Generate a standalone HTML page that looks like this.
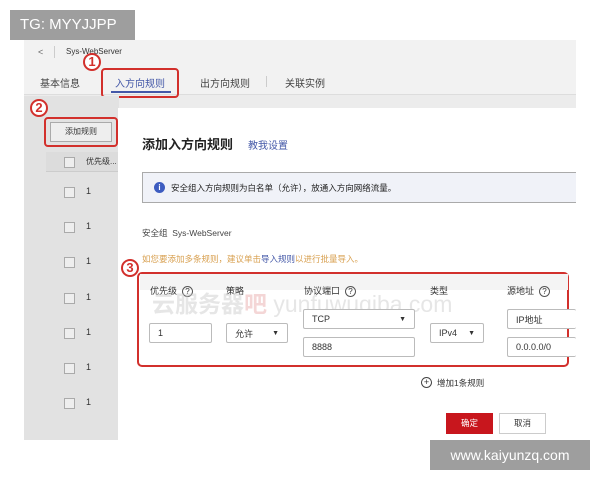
<!DOCTYPE html><html><head><meta charset="utf-8"><style>
*{margin:0;padding:0;box-sizing:border-box}
body{width:600px;height:480px;background:#fff;position:relative;overflow:hidden;font-family:"Liberation Sans","Noto Sans CJK SC",sans-serif;color:#333}
.a{position:absolute}
.t{font-size:9px}
.in{position:absolute;border:1px solid #bbb;background:#fff;font-size:9px;padding-left:8px;display:flex;align-items:center;border-radius:2px}
.q{display:inline-block;width:11px;height:11px;border:1px solid #555;border-radius:50%;font-size:8px;text-align:center;line-height:9px;margin-left:5px}
.cb{position:absolute;left:64px;width:11px;height:11px;border:1px solid #aaa;background:#eee}
.rn{position:absolute;left:86px;font-size:9px}
.circ{position:absolute;width:18px;height:18px;border:2px solid #d2302c;border-radius:50%;color:#d2302c;font-weight:bold;font-size:13px;text-align:center;line-height:14px;background:#fff}
.arr{font-size:7px;position:absolute;right:8px}
</style></head><body>
<div class="a" style="left:24px;top:40px;width:552px;height:400px;background:#ececec"></div>
<div class="a" style="left:24px;top:40px;width:552px;height:55px;background:#f2f2f2;border-bottom:1px solid #ddd"></div>
<div class="a t" style="left:38px;top:47px;color:#666">&lt;</div>
<div class="a" style="left:54px;top:46px;width:1px;height:12px;background:#ccc"></div>
<div class="a t" style="left:66px;top:47px;font-size:8px">Sys-WebServer</div>
<div class="a" style="left:40px;top:75px;font-size:10px;color:#444">基本信息</div>
<div class="a" style="left:115px;top:75px;font-size:10px;color:#4458a8">入方向规则</div>
<div class="a" style="left:111px;top:91px;width:60px;height:2px;background:#4458a8"></div>
<div class="a" style="left:200px;top:75px;font-size:10px;color:#444">出方向规则</div>
<div class="a" style="left:266px;top:76px;width:1px;height:11px;background:#ccc"></div>
<div class="a" style="left:285px;top:75px;font-size:10px;color:#444">关联实例</div>
<div class="a" style="left:101px;top:68px;width:78px;height:30px;border:2px solid #d2302c;border-radius:4px"></div>
<div class="circ" style="left:83px;top:53px">1</div>
<div class="a" style="left:24px;top:96px;width:95px;height:344px;background:#e2e2e2"></div>
<div class="a" style="left:50px;top:122px;width:62px;height:20px;border:1px solid #aaa;background:#eee;font-size:8px;text-align:center;line-height:18px">添加规则</div>
<div class="a" style="left:44px;top:117px;width:74px;height:30px;border:2px solid #d2302c;border-radius:4px"></div>
<div class="circ" style="left:30px;top:99px">2</div>
<div class="a" style="left:46px;top:152px;width:72px;height:20px;background:#dcdcdc;border-bottom:1px solid #ccc"></div>
<div class="cb" style="top:157px"></div><div class="rn" style="top:156px;font-size:8px">优先级...</div>
<div class="cb" style="top:187px"></div><div class="rn" style="top:186px">1</div>
<div class="cb" style="top:222px"></div><div class="rn" style="top:221px">1</div>
<div class="cb" style="top:257px"></div><div class="rn" style="top:256px">1</div>
<div class="cb" style="top:293px"></div><div class="rn" style="top:292px">1</div>
<div class="cb" style="top:328px"></div><div class="rn" style="top:327px">1</div>
<div class="cb" style="top:363px"></div><div class="rn" style="top:362px">1</div>
<div class="cb" style="top:398px"></div><div class="rn" style="top:397px">1</div>
<div class="a" style="left:118px;top:108px;width:458px;height:332px;background:#fff"></div>
<div class="a" style="left:142px;top:134px;font-size:13px;font-weight:bold;color:#222">添加入方向规则</div>
<div class="a" style="left:248px;top:137px;font-size:10px;color:#4458a8">教我设置</div>
<div class="a" style="left:142px;top:172px;width:434px;height:31px;background:#f0f2f8;border:1px solid #aaa;border-right:none"></div>
<div class="a" style="left:154px;top:182px;width:11px;height:11px;border-radius:50%;background:#3d5cc0;color:#fff;font-size:8px;text-align:center;line-height:11px;font-weight:bold">i</div>
<div class="a" style="left:171px;top:182px;font-size:8.5px;color:#222">安全组入方向规则为白名单（允许），放通入方向网络流量。</div>
<div class="a" style="left:142px;top:227px;font-size:8.5px;color:#444">安全组&nbsp;&nbsp;Sys-WebServer</div>
<div class="a" style="left:142px;top:253px;font-size:8.5px;color:#d8a050">如您要添加多条规则，建议单击<span style="color:#4458a8">导入规则</span>以进行批量导入。</div>
<div class="a" style="left:137px;top:272px;width:432px;height:95px;border:2px solid #d2302c;border-radius:5px"></div>
<div class="circ" style="left:121px;top:259px">3</div>
<div class="a" style="left:140px;top:274px;width:428px;height:16px;background:#f4f4f4"></div>
<div class="a" style="left:150px;top:284px;font-size:9px">优先级<span class="q">?</span></div>
<div class="a" style="left:226px;top:284px;font-size:9px">策略</div>
<div class="a" style="left:304px;top:284px;font-size:9px">协议端口<span class="q">?</span></div>
<div class="a" style="left:430px;top:284px;font-size:9px">类型</div>
<div class="a" style="left:507px;top:284px;font-size:9px">源地址<span class="q">?</span></div>
<div class="a" style="left:152px;top:285px;font-size:23px;font-weight:bold;color:rgba(200,200,200,.45)">云服务器<span style="color:rgba(220,120,120,.3)">吧</span> <span style="font-weight:normal;color:rgba(200,200,200,.45)">yunfuwuqiba.com</span></div>
<div class="in" style="left:149px;top:323px;width:63px;height:20px">1</div>
<div class="in" style="left:226px;top:323px;width:62px;height:20px">允许<span class="arr">▼</span></div>
<div class="in" style="left:303px;top:309px;width:112px;height:20px">TCP<span class="arr">▼</span></div>
<div class="in" style="left:303px;top:337px;width:112px;height:20px">8888</div>
<div class="in" style="left:430px;top:323px;width:54px;height:20px">IPv4<span class="arr">▼</span></div>
<div class="in" style="left:507px;top:309px;width:69px;height:20px;border-right:none">IP地址</div>
<div class="in" style="left:507px;top:337px;width:69px;height:20px;border-right:none">0.0.0.0/0</div>
<div class="a" style="left:421px;top:377px;width:11px;height:11px;border:1px solid #444;border-radius:50%;font-size:9px;text-align:center;line-height:9px">+</div>
<div class="a" style="left:437px;top:377px;font-size:8.5px">增加1条规则</div>
<div class="a" style="left:446px;top:413px;width:47px;height:21px;background:#c8161d;color:#fff;font-size:8.5px;text-align:center;line-height:21px">确定</div>
<div class="a" style="left:499px;top:413px;width:47px;height:21px;border:1px solid #ccc;font-size:8.5px;text-align:center;line-height:19px">取消</div>
<div class="a" style="left:10px;top:10px;width:125px;height:30px;background:#9e9e9e;color:#fff;font-size:15px;line-height:30px;padding-left:10px">TG: MYYJJPP</div>
<div class="a" style="left:430px;top:440px;width:160px;height:30px;background:#9e9e9e;color:#fff;font-size:14px;line-height:30px;text-align:center">www.kaiyunzq.com</div>
</body></html>
